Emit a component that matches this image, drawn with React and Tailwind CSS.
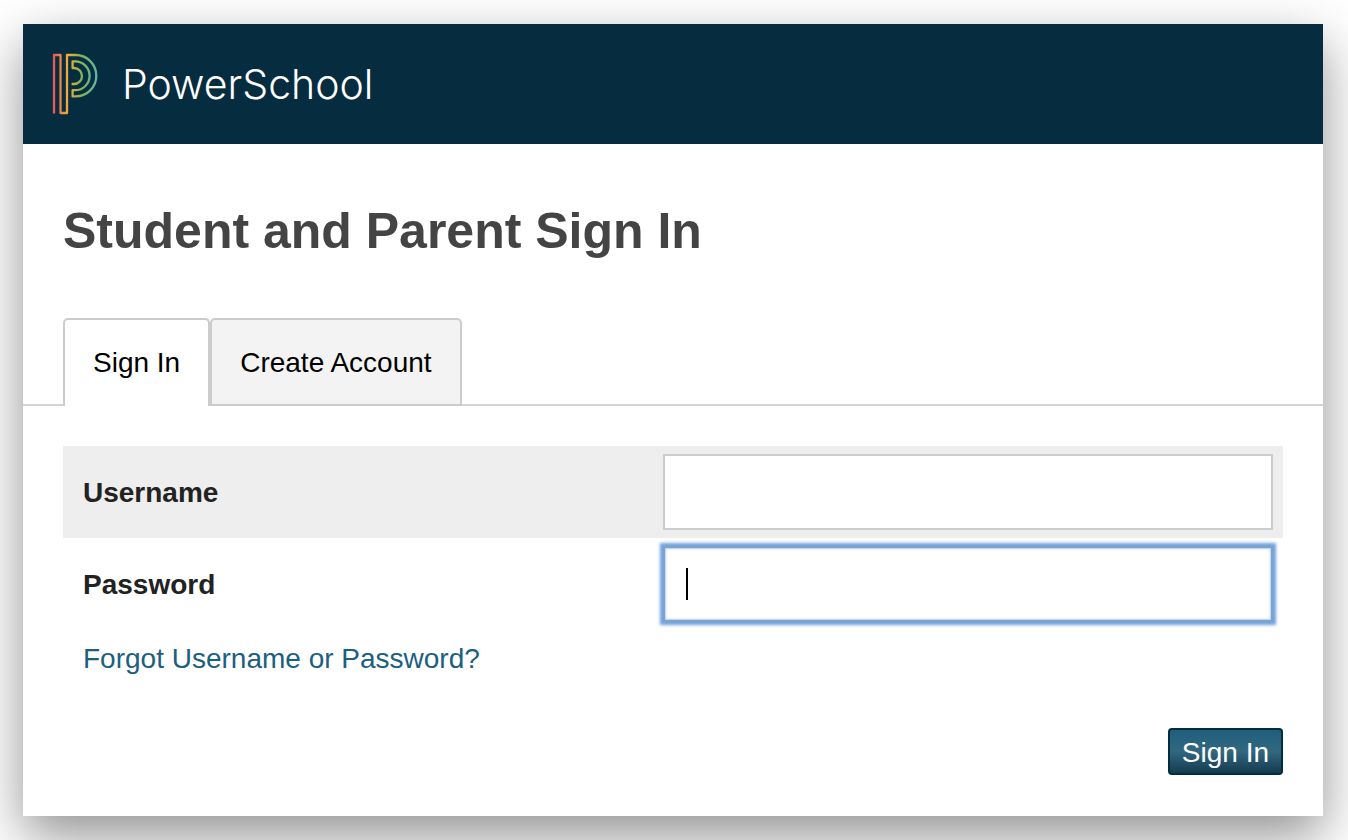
import React, { useState } from "react";

const tabs = [
  { id: "signin", label: "Sign In" },
  { id: "create", label: "Create Account" },
];

function LogoMark() {
  return (
    <svg width="46" height="62" viewBox="0 0 46 62" fill="none" aria-hidden="true">
      <defs>
        <linearGradient id="mark" gradientUnits="userSpaceOnUse" x1="1" y1="0" x2="45" y2="0">
          <stop offset="0" stopColor="#e8545a" />
          <stop offset="0.16" stopColor="#ee7f45" />
          <stop offset="0.33" stopColor="#f2a93b" />
          <stop offset="0.46" stopColor="#c6b040" />
          <stop offset="0.66" stopColor="#7db35c" />
          <stop offset="1" stopColor="#63b3a6" />
        </linearGradient>
      </defs>
      <path
        d="M2 60.5V2H8.5V60H15V2H23.6A20.7 20.7 0 0 1 23.6 43.4H20.6V37.2H23.2A14.4 14.4 0 0 0 23.2 8.4H20.6V15H22A8 8 0 0 1 22 31H19.6"
        stroke="url(#mark)"
        strokeWidth="2.3"
        strokeLinejoin="round"
      />
    </svg>
  );
}

export default function App() {
  const [activeTab, setActiveTab] = useState("signin");

  return (
    <div className="bg-white py-6 pl-[23px] pr-[25px] font-['Liberation_Sans',Arial,sans-serif] text-[28px] leading-8 text-black">
      <main className="bg-white shadow-[0_20px_50px_rgba(0,0,0,0.43)]">
        {/* Brand bar */}
        <header className="flex h-[120px] items-center gap-6 bg-[#062c3f] pl-[29px]">
          <LogoMark />
          <span className="font-['Inter',sans-serif] text-[41px] font-light leading-[60px] text-white">
            PowerSchool
          </span>
        </header>

        <h1 className="px-10 pt-[57px] text-[50px] font-bold leading-[60px] text-[#444444]">
          Student and Parent Sign In
        </h1>

        {/* Tabs */}
        <div role="tablist" className="mt-[57px] flex border-b-2 border-[#d4d4d4] px-10">
          {tabs.map((tab) => (
            <button
              key={tab.id}
              type="button"
              role="tab"
              aria-selected={activeTab === tab.id}
              onClick={() => setActiveTab(tab.id)}
              className={
                activeTab === tab.id
                  ? "-mb-0.5 h-[88px] rounded-t-[5px] border-2 border-b-0 border-[#cccccc] bg-white px-7"
                  : "-mb-0.5 h-[88px] rounded-t-[5px] border-2 border-[#cccccc] bg-[#f3f3f3] px-7 pt-0.5"
              }
            >
              {tab.label}
            </button>
          ))}
        </div>

        {/* Sign in form */}
        <form className="px-10 pt-10 pb-[41px]" onSubmit={(e) => e.preventDefault()}>
          <div className="flex h-[92px] items-center bg-[#eeeeee] pl-5 pr-2.5">
            <label htmlFor="username" className="flex-1 pt-0.5 font-bold text-[#222222]">
              Username
            </label>
            <input
              id="username"
              type="text"
              className="h-[76px] w-1/2 min-w-[610px] border-2 border-[#cccccc] bg-white px-5 outline-none"
            />
          </div>
          <div className="flex h-[92px] items-center pl-5 pr-2.5">
            <label htmlFor="password" className="flex-1 pt-0.5 font-bold text-[#222222]">
              Password
            </label>
            <div className="relative w-1/2 min-w-[610px]">
              <input
                id="password"
                type="password"
                className="block h-[76px] w-full border-2 border-[#7ba3d0] bg-white px-5 caret-transparent shadow-[0_0_3px_3px_#6ea1dc,inset_0_0_2px_1px_#b5cdeb] outline-none"
              />
              <span className="absolute left-[23px] top-[22px] h-8 w-0.5 bg-black" />
            </div>
          </div>
          <div className="mt-[13px] pl-5">
            <a href="#forgot" className="text-[#1b607f]">
              Forgot Username or Password?
            </a>
          </div>
          <div className="mt-[53px] flex justify-end">
            <button
              type="submit"
              className="h-[47px] rounded-[4px] border-2 border-[#042c40] bg-linear-to-b from-[#1f5f7d] via-[#32677f] to-[#153b4f] px-3 pt-0.5 text-white"
            >
              Sign In
            </button>
          </div>
        </form>
      </main>
    </div>
  );
}
